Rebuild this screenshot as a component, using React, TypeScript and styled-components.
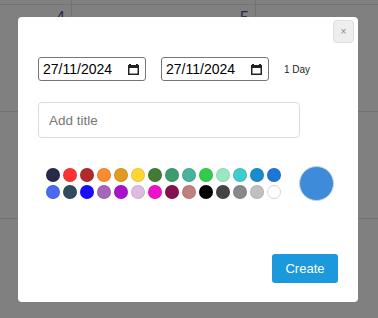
import React, { useState } from "react";
import styled, { createGlobalStyle } from "styled-components";

const GlobalStyle = createGlobalStyle`
    html, body {
        margin: 0;
        padding: 0;
        background: #808080;
        font-family: "Liberation Sans", Arial, sans-serif;
    }
`;

const ROW_ONE = ["#272a48", "#ff3232", "#b02a2a", "#ff8a30", "#e39a22", "#ffd633", "#437a35", "#3e9a70", "#4ab39d", "#33cc4a", "#98e8c0", "#40cccc", "#1a8bcc", "#1a76d9"];
const ROW_TWO = ["#4a6af0", "#304a5e", "#1a0dff", "#a666bb", "#aa11cc", "#dfbbdf", "#ee11cc", "#841150", "#c08080", "#000000", "#444444", "#888888", "#c0c0c0", "#ffffff"];

const CalendarIcon = () => (
    <svg width="11" height="12" viewBox="0 0 11 12">
        <rect x="1" y="1" width="2" height="2" fill="#222" />
        <rect x="8" y="1" width="2" height="2" fill="#222" />
        <rect x="0.75" y="2.75" width="9.5" height="8.5" fill="none" stroke="#222" strokeWidth="1.5" />
        <rect x="0" y="2" width="11" height="3" fill="#222" />
    </svg>
);

// 日期框（固定 dd/mm/yyyy 显示）
const DateField = ({ value }) => (
    <DateBox>
        <DateText value={value} readOnly />
        <CalendarIcon />
    </DateBox>
);

/**
 * 新建事件弹窗（日历背景）
 */
const App = () => {

    const [title, setTitle] = useState("");
    const [color, setColor] = useState("#3d8bd9");

    const days = [null, null, null, 4, 5, null, null, null, null];

    return (
        <Page>
            <GlobalStyle />
            <Calendar>
                {days.map((d, i) => (
                    <DayCell key={i}>{d}</DayCell>
                ))}
            </Calendar>
            <Modal>
                <CloseButton>×</CloseButton>
                <DateRow>
                    <DateField value="27/11/2024" />
                    <DateField value="27/11/2024" />
                    <DayCount>1 Day</DayCount>
                </DateRow>
                <TitleInput placeholder="Add title" value={title} onChange={(e) => setTitle(e.target.value)} />
                <ColorRow>
                    <Swatches>
                        {[...ROW_ONE, ...ROW_TWO].map((c) => (
                            <Swatch key={c} $color={c} onClick={() => setColor(c)} />
                        ))}
                    </Swatches>
                    <Preview $color={color} />
                </ColorRow>
                <Footer>
                    <CreateButton>Create</CreateButton>
                </Footer>
            </Modal>
        </Page>
    )
};

const Page = styled.div`
    position: relative;
    width: 378px;
    height: 318px;
    overflow: hidden;
    background: #808080;
`;

const Calendar = styled.div`
    display: grid;
    grid-template-columns: repeat(3, 184px);
    grid-auto-rows: 107px;
    margin: -102px 0 0 -112px;
`;

const DayCell = styled.div`
    box-sizing: border-box;
    border-right: 1px solid #727272;
    border-bottom: 1px solid #727272;
    padding: 4px 6px;
    text-align: right;
    font-size: 16px;
    color: #1f2b48;
`;

const Modal = styled.div`
    position: absolute;
    left: 18px;
    top: 17px;
    width: 340px;
    height: 285px;
    box-sizing: border-box;
    background: #fff;
    border-radius: 4px;
    padding: 40px 20px 19px 20px;
    display: flex;
    flex-direction: column;
`;

const CloseButton = styled.button`
    position: absolute;
    top: 3px;
    right: 4px;
    width: 21px;
    height: 23px;
    padding: 0;
    background: #eeeeee;
    border: 1px solid #dddddd;
    border-radius: 4px;
    color: #8a8a8a;
    font-size: 10px;
    line-height: 1;
    cursor: pointer;
`;

const DateRow = styled.div`
    display: flex;
    align-items: center;
    gap: 15px;
`;

const DateBox = styled.label`
    box-sizing: border-box;
    display: flex;
    align-items: center;
    width: 108px;
    height: 24px;
    padding: 0 6px 0 4px;
    border: 1px solid #767676;
    border-radius: 3px;
    background: #fff;
`;

const DateText = styled.input`
    flex: 1;
    min-width: 0;
    padding: 0;
    border: none;
    outline: none;
    background: transparent;
    font-family: "Liberation Sans", Arial, sans-serif;
    font-size: 14px;
    color: #000;
`;

const DayCount = styled.span`
    font-size: 10px;
    color: #222;
`;

const TitleInput = styled.input`
    box-sizing: border-box;
    margin-top: 21px;
    width: 262px;
    height: 36px;
    padding: 0 10px;
    border: 1px solid #dcdcdc;
    border-radius: 4px;
    font-family: "Liberation Sans", Arial, sans-serif;
    font-size: 13.5px;
    outline: none;
    &::placeholder {
        color: #777;
    }
`;

const ColorRow = styled.div`
    display: flex;
    align-items: center;
    gap: 18px;
    margin-top: 28px;
    padding-left: 8px;
`;

const Swatches = styled.div`
    display: grid;
    grid-template-columns: repeat(14, 14px);
    gap: 3px;
`;

const Swatch = styled.div<{ $color: string }>`
    box-sizing: border-box;
    width: 14px;
    height: 14px;
    border-radius: 50%;
    background: ${(p) => p.$color};
    border: 1px solid ${(p) => (p.$color === "#ffffff" ? "#d6d6d6" : "rgba(0,0,0,0.08)")};
    cursor: pointer;
`;

const Preview = styled.div<{ $color: string }>`
    box-sizing: border-box;
    width: 35px;
    height: 35px;
    border-radius: 50%;
    background: ${(p) => p.$color};
    border: 1px solid #c9d6e4;
`;

const Footer = styled.div`
    margin-top: auto;
    display: flex;
    justify-content: flex-end;
`;

const CreateButton = styled.button`
    width: 66px;
    height: 29px;
    border: none;
    border-radius: 3px;
    background: #1b99dc;
    color: #fff;
    font-family: "Liberation Sans", Arial, sans-serif;
    font-size: 13px;
    cursor: pointer;
`;

export default App;
